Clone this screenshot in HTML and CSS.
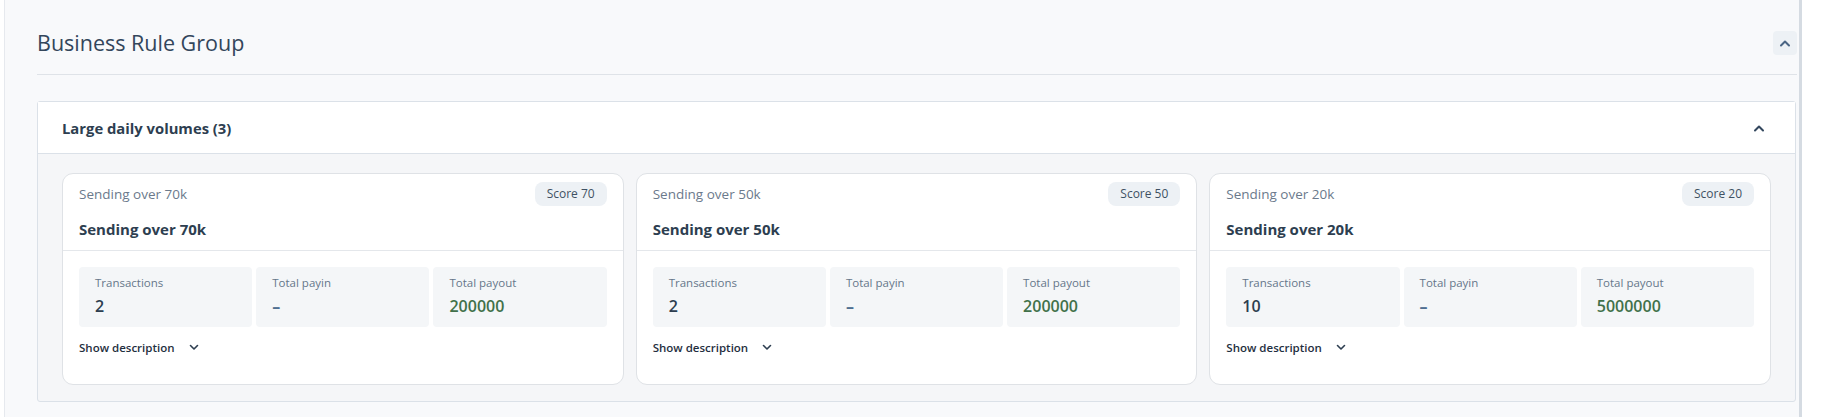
FILE: index.html
```html
<!DOCTYPE html>
<html lang="en">
<head>
<meta charset="UTF-8">
<meta name="viewport" content="width=device-width, initial-scale=1.0">
<title>Business Rule Group</title>
<link rel="stylesheet" href="styles.css">
</head>
<body>

<div class="page">
  <div class="group-head">
    <h1>Business Rule Group</h1>
    <button class="icon-btn" aria-label="Collapse">
      <svg width="12" height="8" viewBox="0 0 12 8"><path d="M2 6.5 6 2.5 10 6.5" fill="none" stroke="#4a6584" stroke-width="2" stroke-linecap="round" stroke-linejoin="round"/></svg>
    </button>
  </div>

  <div class="rule-box">
    <div class="rule-box-head">
      <span>Large daily volumes (3)</span>
      <span class="caret">
        <svg width="12" height="8" viewBox="0 0 12 8"><path d="M2 6.5 6 2.5 10 6.5" fill="none" stroke="#33475e" stroke-width="2" stroke-linecap="round" stroke-linejoin="round"/></svg>
      </span>
    </div>

    <div class="rule-box-body">
      <div class="card">
        <div class="card-head">
          <div class="card-top">
            <span class="card-sub">Sending over 70k</span>
            <span class="badge">Score 70</span>
          </div>
          <div class="card-title">Sending over 70k</div>
        </div>
        <div class="card-body">
          <div class="stats">
            <div class="stat"><div class="stat-label">Transactions</div><div class="stat-value">2</div></div>
            <div class="stat"><div class="stat-label">Total payin</div><div class="stat-value empty">–</div></div>
            <div class="stat"><div class="stat-label">Total payout</div><div class="stat-value money">200000</div></div>
          </div>
          <div class="show-desc">Show description
            <svg width="10" height="7" viewBox="0 0 10 7"><path d="M1.5 1.5 5 5 8.5 1.5" fill="none" stroke="#2d3e50" stroke-width="1.6" stroke-linecap="round" stroke-linejoin="round"/></svg>
          </div>
        </div>
      </div>

      <div class="card">
        <div class="card-head">
          <div class="card-top">
            <span class="card-sub">Sending over 50k</span>
            <span class="badge">Score 50</span>
          </div>
          <div class="card-title">Sending over 50k</div>
        </div>
        <div class="card-body">
          <div class="stats">
            <div class="stat"><div class="stat-label">Transactions</div><div class="stat-value">2</div></div>
            <div class="stat"><div class="stat-label">Total payin</div><div class="stat-value empty">–</div></div>
            <div class="stat"><div class="stat-label">Total payout</div><div class="stat-value money">200000</div></div>
          </div>
          <div class="show-desc">Show description
            <svg width="10" height="7" viewBox="0 0 10 7"><path d="M1.5 1.5 5 5 8.5 1.5" fill="none" stroke="#2d3e50" stroke-width="1.6" stroke-linecap="round" stroke-linejoin="round"/></svg>
          </div>
        </div>
      </div>

      <div class="card">
        <div class="card-head">
          <div class="card-top">
            <span class="card-sub">Sending over 20k</span>
            <span class="badge">Score 20</span>
          </div>
          <div class="card-title">Sending over 20k</div>
        </div>
        <div class="card-body">
          <div class="stats">
            <div class="stat"><div class="stat-label">Transactions</div><div class="stat-value">10</div></div>
            <div class="stat"><div class="stat-label">Total payin</div><div class="stat-value empty">–</div></div>
            <div class="stat"><div class="stat-label">Total payout</div><div class="stat-value money">5000000</div></div>
          </div>
          <div class="show-desc">Show description
            <svg width="10" height="7" viewBox="0 0 10 7"><path d="M1.5 1.5 5 5 8.5 1.5" fill="none" stroke="#2d3e50" stroke-width="1.6" stroke-linecap="round" stroke-linejoin="round"/></svg>
          </div>
        </div>
      </div>
    </div>
  </div>
</div>

</body>
</html>
```

FILE: styles.css
```css
body {
  margin: 0;
  background-color: #fff;
  font-family: "Open Sans", Lato, sans-serif;
  color: #2d3e50;
}

.page {
  margin: 0 21px 0 4px;
  height: 417px;
  box-sizing: border-box;
  padding: 30px 2px 16px 32px;
  background-color: #f8f9fb;
  border-left: 1px solid #e6e9ee;
  border-right: 3px solid #d5dbe2;
}

.group-head {
  display: flex;
  justify-content: space-between;
  align-items: center;
  padding-bottom: 18px;
  border-bottom: 1px solid #dfe3e8;
}

h1 {
  margin: 0;
  font-size: 21.5px;
  line-height: 26px;
  font-weight: 400;
  color: #33465b;
}

.icon-btn {
  width: 24px;
  height: 24px;
  padding: 0;
  border: none;
  border-radius: 4px;
  background-color: #edf1f5;
  display: flex;
  align-items: center;
  justify-content: center;
}

.rule-box {
  margin-top: 26px;
  margin-right: 1px;
  border: 1px solid #dbe1e8;
  border-radius: 3px;
  background-color: #f5f6f8;
}

.rule-box-head {
  display: flex;
  justify-content: space-between;
  align-items: center;
  height: 51px;
  padding: 0 24px;
  background-color: #fff;
  border-bottom: 1px solid #dbe1e8;
  font-size: 14.8px;
  font-weight: 700;
  color: #2d3e50;
}

.caret {
  width: 24px;
  display: flex;
  justify-content: center;
}

.rule-box-body {
  display: grid;
  grid-template-columns: repeat(3, 1fr);
  gap: 12px;
  padding: 19px 24px 16px;
}

.card {
  background-color: #fff;
  border: 1px solid #dfe2e6;
  border-radius: 11px;
}

.card-head {
  padding: 8px 16px 10px;
  border-bottom: 1px solid #e4e7eb;
}

.card-top {
  display: flex;
  justify-content: space-between;
  align-items: center;
}

.card-sub {
  font-size: 13.5px;
  line-height: 20px;
  color: #6b7a8c;
}

.badge {
  height: 24px;
  line-height: 24px;
  padding: 0 12px;
  border-radius: 8px;
  background-color: #edf1f5;
  font-size: 12px;
  color: #3f5163;
}

.card-title {
  margin-top: 12px;
  font-size: 15px;
  line-height: 22px;
  font-weight: 700;
  color: #2d3e50;
}

.card-body {
  padding: 16px 16px 27px;
}

.stats {
  display: grid;
  grid-template-columns: repeat(3, 1fr);
  gap: 4px;
}

.stat {
  height: 60px;
  box-sizing: border-box;
  padding: 8px 16px;
  border-radius: 4px;
  background-color: #f4f6f8;
}

.stat-label {
  font-size: 11.5px;
  line-height: 16px;
  color: #66768a;
}

.stat-value {
  margin-top: 5px;
  font-size: 16px;
  line-height: 20px;
  font-weight: 600;
  color: #2d3e50;
}

.stat-value.empty {
  color: #4f6f91;
  font-weight: 700;
}

.stat-value.money {
  color: #41714a;
}

.show-desc {
  display: flex;
  align-items: center;
  gap: 14px;
  margin-top: 10px;
  height: 20px;
  font-size: 11.5px;
  font-weight: 600;
  color: #1f2f40;
}
```
